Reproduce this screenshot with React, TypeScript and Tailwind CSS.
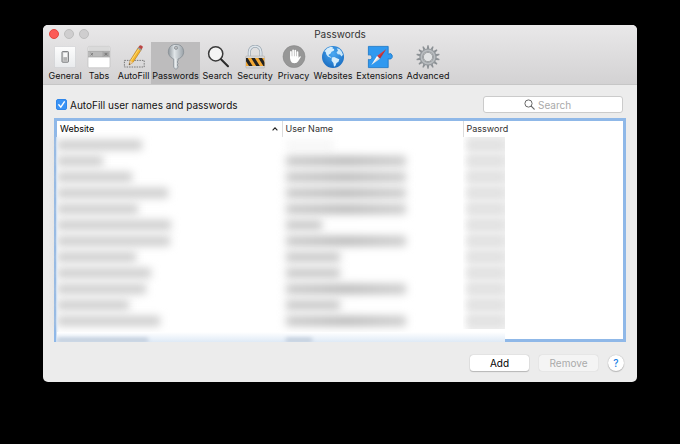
import type { ReactNode } from "react"
import { clsx } from "clsx"

/* Toolbar icons, all drawn on a 24 x 24 canvas */

const GeneralIcon = () => (
  <svg viewBox="0 0 24 24" className="size-6" aria-hidden>
    <defs>
      <linearGradient id="plate" x1="0" y1="0" x2="0" y2="1">
        <stop offset="0" stopColor="#fdfdfd" />
        <stop offset="1" stopColor="#e9ebed" />
      </linearGradient>
    </defs>
    <rect x="1.5" y="1.5" width="21" height="21" rx="1" fill="url(#plate)" stroke="#cdcfd1" strokeWidth="0.6" />
    <rect x="9" y="6.6" width="6.4" height="10.6" rx="0.6" fill="#d9d9d9" stroke="#77797b" strokeWidth="1" />
    <rect x="10.4" y="8" width="3.6" height="4.2" fill="#f8f8f8" />
    <rect x="10.4" y="12.2" width="3.6" height="3.6" fill="#b3b3b3" />
  </svg>
)

const TabsIcon = () => (
  <svg viewBox="0 0 24 24" className="size-6" aria-hidden>
    <rect x="1" y="1.4" width="22" height="21.4" rx="1.6" fill="#fff" stroke="#bfbfbf" strokeWidth="0.7" />
    <path d="M1.3 3q0-1.3 1.3-1.3h18.8q1.3 0 1.3 1.3v4H1.3z" fill="#dadada" />
    <rect x="1" y="6.4" width="22" height="5.6" fill="#b9b9b9" />
    <path d="M1 6.4h22M1 12h22M16 6.4V12" stroke="#999" strokeWidth="0.6" />
    <path d="m3.6 8 2.4 2.4M6 8l-2.4 2.4" stroke="#727272" strokeWidth="0.8" />
    <rect x="16.4" y="7.2" width="5.4" height="4" fill="#a2a2a2" />
    <path d="m17.8 8 2.4 2.4m0-2.4-2.4 2.4" stroke="#6f6f6f" strokeWidth="0.8" />
  </svg>
)

const AutoFillIcon = () => (
  <svg viewBox="0 0 24 24" className="size-6" aria-hidden>
    <rect x="2.4" y="15.4" width="19.8" height="6.6" fill="none" stroke="#6d6d6d" strokeWidth="0.9" strokeDasharray="1.5 1" />
    <path d="m7 20 1.2-4.5L16.5 2.2l3.2 2L11 17.4z" fill="#f4b62c" stroke="#ad7420" strokeWidth="0.6" />
    <path d="m9.1 15.7 8.5-12.8" stroke="#ffdc72" strokeWidth="1" />
    <path d="m7 20 1.2-4.5L11 17.4z" fill="#e9c99a" />
    <path d="m7 20 .4-1.8 1 .8z" fill="#262626" />
    <path d="m15.6 3.6.9-1.4 3.2 2-.9 1.5z" fill="#959ba4" />
    <path d="m16.5 2.2.9-1.5q.7-.9 1.8-.3l1 .7q1 .7.4 1.7l-.9 1.4z" fill="#bb4544" />
  </svg>
)

const PasswordsIcon = () => (
  <svg viewBox="0 0 24 24" className="size-6 overflow-visible" aria-hidden>
    <defs>
      <linearGradient id="key" x1="0" x2="1">
        <stop offset="0" stopColor="#8f979d" />
        <stop offset="0.4" stopColor="#e0e5e8" />
        <stop offset="1" stopColor="#9aa2a8" />
      </linearGradient>
    </defs>
    <path
      fillRule="evenodd"
      d="M12 -.6a7.6 7.4 0 0 0-3.1 14.2l.8.4v8.4l2.3 2 2-1.9V21l-1-1 1-1v-1l-1-1 1-1v-2l1.1-.4A7.6 7.4 0 0 0 12 -.6zm0 1.8a1.6 1.6 0 1 1 0 3.2 1.6 1.6 0 0 1 0-3.2z"
      fill="url(#key)"
      stroke="#868e94"
      strokeWidth="0.8"
    />
    <path d="M11.8 13.4v9" stroke="#f1f3f4" strokeWidth="1" />
  </svg>
)

const SearchIcon = () => (
  <svg viewBox="0 0 24 24" className="size-6" aria-hidden>
    <circle cx="9.7" cy="8.8" r="7.1" fill="#f4f4f4" stroke="#3b3b3b" strokeWidth="1.5" />
    <path d="m15 14.2 7 7" stroke="#2f2f2f" strokeWidth="2.1" strokeLinecap="round" />
  </svg>
)

const SecurityIcon = () => (
  <svg viewBox="0 0 24 24" className="size-6" aria-hidden>
    <defs>
      <clipPath id="lock-body">
        <rect x="3" y="13" width="18.4" height="8" />
      </clipPath>
    </defs>
    <path d="M6.3 12V7a5.8 5.8 0 0 1 11.6 0v5" fill="none" stroke="#9ca8b2" strokeWidth="3" />
    <path d="M6.3 12V7a5.8 5.8 0 0 1 11.6 0v5" fill="none" stroke="#dfe6ec" strokeWidth="1.6" />
    <rect x="2.8" y="11" width="18.8" height="12" rx="0.8" fill="#d5d5d5" stroke="#aaa" strokeWidth="0.5" />
    <rect x="3" y="13" width="18.4" height="8" fill="#f3a935" />
    <path
      clipPath="url(#lock-body)"
      d="M1 13h3.6l5 8H6zM8.2 13h3.6l5 8h-3.6zM15.4 13H19l5 8h-3.6z"
      fill="#222"
    />
  </svg>
)

const PrivacyIcon = () => (
  <svg viewBox="0 0 24 24" className="size-6" aria-hidden>
    <circle cx="12" cy="11.6" r="11" fill="#979797" stroke="#858585" strokeWidth="0.5" />
    <path
      d="M8.9 12.7V6.8M11.1 11.6V5.3M13.3 11.6v-6M15.5 12.4V7.2"
      stroke="#fff"
      strokeWidth="1.7"
      strokeLinecap="round"
    />
    <path
      d="M8 11.2h8.4V13l1.1-1.3q.8-.7 1.5 0l-2.8 4.6q-1 2-3.8 2-3 0-3.7-2.2-.7-2-.7-4.9z"
      fill="#fff"
    />
  </svg>
)

const WebsitesIcon = () => (
  <svg viewBox="0 0 24 24" className="size-6" aria-hidden>
    <defs>
      <radialGradient id="ocean" cx="0.5" cy="0.35" r="0.7">
        <stop offset="0" stopColor="#4aa9f3" />
        <stop offset="1" stopColor="#1668bd" />
      </radialGradient>
    </defs>
    <circle cx="12" cy="12" r="11" fill="url(#ocean)" />
    <path
      d="M3.3 6.2Q6 2.5 9.8 1.8l2.4.6-.8 1.2 1.8.5-.4 1.7-2.3 1-.9 1.8-2 1.1.3 1.4 1.4.4 1.1 1.2-1.2-.1-2.3-1.2-1.5-2-.7-2.4z"
      fill="#d6edfb"
    />
    <path d="m10.8 12.6 2.4-.7 2.6 1.4 2.5 1-.8 2.4-2 1.4-1 2.6-1.5 1-.6-3.6-1.8-2.4z" fill="#d6edfb" />
    <path d="m15.7 3.2 2.8.9 2.3 2.7 1.2 3-1.5 1.6-1.5-1.8-2.3-.4-1.2-2 1.5-1.4z" fill="#c8e6f9" />
  </svg>
)

const ExtensionsIcon = () => (
  <svg viewBox="0 0 26 24" className="h-6 w-[26px]" aria-hidden>
    <path
      d="M1.4 1.4h19.8v7.8q2.8-1.7 3.9.8.8 2.7-.9 3.7-1.5.8-3 0v8.9H1.4v-8.2q3.2 1 3.5-2.1-.3-3.2-3.5-2.2z"
      fill="#3099f0"
      stroke="#1774c5"
      strokeWidth="0.8"
    />
    <path d="M19.3 4 13 13.7l-3-2.8z" fill="#d93b3d" />
    <path d="m4.3 19.9 5.7-9 3 2.8z" fill="#fff" />
    <path d="M19.3 4 4.3 19.9 13 13.7z" fill="#000" opacity="0.14" />
  </svg>
)

const GEAR_TEETH = Array.from({ length: 14 }, (_, i) => (i * 360) / 14)

const AdvancedIcon = () => (
  <svg viewBox="0 0 24 24" className="size-6" aria-hidden>
    {GEAR_TEETH.map((angle) => (
      <path key={angle} d="m10.7 4 .7-3.7h1.2l.7 3.7z" fill="#8c9195" transform={`rotate(${angle} 12 12)`} />
    ))}
    <circle cx="12" cy="12" r="6.8" fill="none" stroke="#92979b" strokeWidth="3.6" />
    <circle cx="12" cy="12" r="6.6" fill="none" stroke="#b8bcbf" strokeWidth="1.7" />
    <circle cx="12" cy="12" r="4.6" fill="#e1e3e4" stroke="#85898c" strokeWidth="0.7" />
  </svg>
)

const tabs: { label: string; width: string; icon: ReactNode }[] = [
  { label: "General", width: "w-[34px]", icon: <GeneralIcon /> },
  { label: "Tabs", width: "w-[34px]", icon: <TabsIcon /> },
  { label: "AutoFill", width: "w-[35px]", icon: <AutoFillIcon /> },
  { label: "Passwords", width: "w-[49px]", icon: <PasswordsIcon /> },
  { label: "Search", width: "w-[35px]", icon: <SearchIcon /> },
  { label: "Security", width: "w-[40px]", icon: <SecurityIcon /> },
  { label: "Privacy", width: "w-[37px]", icon: <PrivacyIcon /> },
  { label: "Websites", width: "w-[42px]", icon: <WebsitesIcon /> },
  { label: "Extensions", width: "w-[51px]", icon: <ExtensionsIcon /> },
  { label: "Advanced", width: "w-[46px]", icon: <AdvancedIcon /> },
]

// Redacted rows: only the length of each hidden value is known.
const rows = [
  { site: 85, user: 48, faint: true },
  { site: 46, user: 120 },
  { site: 75, user: 120 },
  { site: 111, user: 120 },
  { site: 81, user: 120 },
  { site: 114, user: 36 },
  { site: 113, user: 120 },
  { site: 79, user: 54 },
  { site: 94, user: 54 },
  { site: 89, user: 120 },
  { site: 72, user: 54 },
  { site: 103, user: 120 },
]

function Redacted({ width, className }: { width: number; className: string }) {
  return <div className={clsx("h-2.5 blur-xs", className)} style={{ width }} />
}

function Toolbar() {
  return (
    <header className="border-b border-[#c6c6c6] bg-linear-to-b from-[#e9e8e9] to-[#d3d2d3]">
      <div className="grid h-[17px] grid-cols-[1fr_auto_1fr] items-center px-1.5">
        <div className="flex gap-[5px]">
          <button aria-label="Close" className="size-2.5 rounded-full border border-[#e2463f] bg-[#fc5b57]" />
          <button aria-label="Minimize" className="size-2.5 rounded-full border border-[#bdbdbd] bg-[#cfcecf]" />
          <button aria-label="Zoom" className="size-2.5 rounded-full border border-[#bdbdbd] bg-[#cfcecf]" />
        </div>
        <h1 className="text-[10px] leading-4 text-[#333]">Passwords</h1>
      </div>
      <nav className="flex pl-[5px]">
        {tabs.map(({ label, width, icon }) => (
          <button
            key={label}
            className={clsx(
              "flex h-[42px] shrink-0 flex-col items-center pt-[3px] text-[9px] leading-3 whitespace-nowrap text-[#111]",
              width,
              label === "Passwords" && "bg-[#bdbcbd]",
            )}
          >
            {icon}
            <span className="mt-px">{label}</span>
          </button>
        ))}
      </nav>
    </header>
  )
}

function PasswordTable() {
  return (
    <div className="relative mt-[5px] border-3 border-[#8fb8e8] bg-white">
      <table className="w-full table-fixed border-collapse text-left text-[9px] leading-4 text-[#333]">
        <thead>
          <tr className="h-4">
            <th className="w-[225px] p-0 pl-[3px] font-normal text-black">
              <div className="flex items-center justify-between pr-1">
                Website
                <svg viewBox="0 0 6 4" className="h-1 w-1.5" aria-hidden>
                  <path d="m.6 3.4 2.4-2.6 2.4 2.6" fill="none" stroke="#222" strokeWidth="1.1" />
                </svg>
              </div>
            </th>
            <th className="w-[181px] border-l border-[#dcdcdc] p-0 pl-[3px] font-normal">User Name</th>
            <th className="border-l border-[#dcdcdc] p-0 pl-[3px] font-normal">Password</th>
          </tr>
        </thead>
        <tbody>
          {rows.map((row, i) => (
            <tr key={i} className="h-4">
              <td className="p-0">
                <Redacted width={row.site} className="bg-[#cdcdcd]" />
              </td>
              <td className="p-0 pl-1">
                <Redacted
                  width={row.user}
                  className={
                    row.faint
                      ? "bg-[#f6f6f6]"
                      : row.user > 100
                        ? "bg-linear-to-r from-[#c8c8c8] via-[#b8b8b8] to-[#cbcbcb]"
                        : "bg-[#c8c8c8]"
                  }
                />
              </td>
              <td className="p-0">
                <div className="flex h-4 w-[42px] items-center overflow-hidden bg-linear-to-r from-white to-[#f0f0f0] to-20% pl-1">
                  <Redacted width={38} className="bg-[#dfdfdf]" />
                </div>
              </td>
            </tr>
          ))}
        </tbody>
      </table>
      <div className="h-2.5" />
      {/* smear of the selected row over the focus ring */}
      <div className="absolute top-4 -bottom-[3px] -left-px w-[3px] bg-linear-to-r from-[#dbe8f7] to-transparent" />
      <div className="absolute -bottom-[3px] left-0 flex h-2.5 w-[448px] items-end overflow-hidden bg-linear-to-b from-white to-[#dfeaf6]">
        <div className="h-1 w-[91px] bg-[#b9c6d6] blur-[2px]" />
        <div className="ml-[138px] h-1 w-[26px] bg-[#b9c6d6] blur-[2px]" />
      </div>
    </div>
  )
}

export default function App() {
  return (
    <div className="min-h-screen bg-black px-[43px] py-[25px] font-[Inter,sans-serif]">
      <div className="overflow-hidden rounded-[5px] bg-[#ececec]">
        <Toolbar />
        <main className="px-[11px] pt-[11px] pb-[11px]">
          <div className="flex items-center justify-between pr-[3px] pl-0.5">
            <label className="flex items-center gap-[3px] text-[10px] leading-4 text-[#111]">
              <span className="grid size-[11px] place-items-center">
                <input
                  type="checkbox"
                  defaultChecked
                  className="peer col-start-1 row-start-1 size-[11px] appearance-none rounded-xs border border-[#b5b5b5] bg-white checked:border-[#2f86ea] checked:bg-[#3a93f5]"
                />
                <svg viewBox="0 0 11 11" className="pointer-events-none col-start-1 row-start-1 hidden size-[11px] peer-checked:block" aria-hidden>
                  <path d="m2.8 5.8 2 2.3L8.3 2.8" fill="none" stroke="#fff" strokeWidth="1.4" strokeLinecap="round" />
                </svg>
              </span>
              AutoFill user names and passwords
            </label>
            <label className="flex h-[17px] w-[140px] items-center justify-center gap-[3px] rounded-[3px] border border-[#cbcbcb] bg-white">
              <svg viewBox="0 0 11 11" className="size-[11px] shrink-0" aria-hidden>
                <circle cx="4.5" cy="4.5" r="3.6" fill="none" stroke="#686868" strokeWidth="1" />
                <path d="m7.2 7.2 3 3" stroke="#686868" strokeWidth="1.2" strokeLinecap="round" />
              </svg>
              <input
                type="search"
                aria-label="Search"
                placeholder="Search"
                className="w-11 appearance-none bg-transparent text-[10px] leading-4 outline-none placeholder:text-[#a9a9a9] [&::-webkit-search-cancel-button]:hidden"
              />
            </label>
          </div>
          <PasswordTable />
          <div className="mt-[13px] flex items-center justify-end gap-2.5 pr-0.5 text-[10px] leading-4">
            <button className="h-4 w-[59px] rounded-[3px] bg-white text-black shadow-[0_0_1px_#999,0_1px_1px_#bbb]">Add</button>
            <button disabled className="h-4 w-[59px] rounded-[3px] bg-[#f4f4f4] text-[#aaa] shadow-[0_0_1px_#bbb]">
              Remove
            </button>
            <button aria-label="Help" className="size-4 rounded-full bg-white font-medium text-[#1b7fe6] shadow-[0_0_1px_#999,0_1px_1px_#bbb]">
              ?
            </button>
          </div>
        </main>
      </div>
    </div>
  )
}
